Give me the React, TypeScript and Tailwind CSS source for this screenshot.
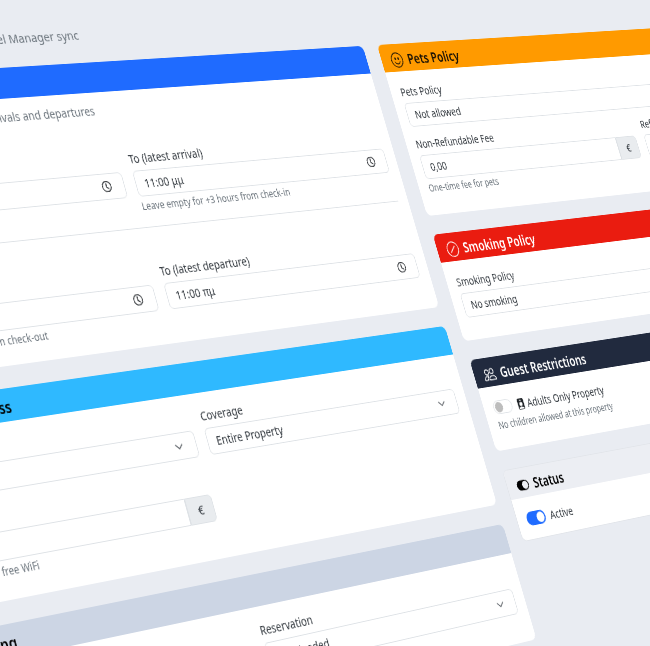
import type { ReactNode } from 'react';
import {
  BsCarFront,
  BsChevronDown,
  BsClock,
  BsEmojiSmile,
  BsPeople,
  BsPersonBadgeFill,
  BsSlashCircle,
  BsToggleOn,
  BsWifi,
} from 'react-icons/bs';

type Pt = [number, number];

// flat page point -> where it lands in the photographed page
const FLAT: Pt[] = [[852, 80], [852, 714], [422, 212], [422, 767]];
const SHOT: Pt[] = [[377, 45], [523, 542], [132, 171], [264, 645]];

function perspective(src: Pt[], dst: Pt[]) {
  const m: number[][] = [];
  src.forEach(([x, y], i) => {
    const [u, v] = dst[i];
    m.push([x, y, 1, 0, 0, 0, -x * u, -y * u, u]);
    m.push([0, 0, 0, x, y, 1, -x * v, -y * v, v]);
  });
  for (let c = 0; c < 8; c++) {
    let p = c;
    for (let r = c + 1; r < 8; r++) if (Math.abs(m[r][c]) > Math.abs(m[p][c])) p = r;
    [m[c], m[p]] = [m[p], m[c]];
    for (let r = 0; r < 8; r++) {
      if (r === c) continue;
      const f = m[r][c] / m[c][c];
      for (let k = c; k < 9; k++) m[r][k] -= f * m[c][k];
    }
  }
  const h = m.map((row, i) => row[8] / row[i]);
  return `matrix3d(${h[0]},${h[3]},0,${h[6]},${h[1]},${h[4]},0,${h[7]},0,0,1,0,${h[2]},${h[5]},0,1)`;
}

function Card({ title, icon, head, pt, pb, children }: { title: string; icon?: ReactNode; head: string; pt?: string; pb: string; children: ReactNode }) {
  return (
    <div className="rounded-lg bg-white overflow-hidden">
      <div className={`h-9 px-4 pt-[5px] flex items-center gap-2 text-[17px] font-semibold ${head}`}>
        <span className="text-xl">{icon}</span>
        <span>{title}</span>
      </div>
      <div className={`px-4 ${pt ?? 'pt-4'} ${pb}`}>{children}</div>
    </div>
  );
}

function Label({ children }: { children: ReactNode }) {
  return <div className="text-sm leading-[21px] mb-1 text-[#343a40]">{children}</div>;
}

function Help({ children }: { children: ReactNode }) {
  return <div className="text-xs leading-4 mt-1 text-[#6c757d]">{children}</div>;
}

function Field({ label, value, icon }: { label: string; value: string; icon?: ReactNode }) {
  return (
    <div>
      <Label>{label}</Label>
      <div className="h-[31px] border border-[#dee2e6] rounded-md pl-3 pr-[18px] flex items-center justify-between text-sm text-[#343a40]">
        <span>{value}</span>
        {icon}
      </div>
    </div>
  );
}

function Money({ label, value }: { label: string; value: string }) {
  return (
    <div>
      <Label>{label}</Label>
      <div className="h-[31px] flex text-sm text-[#343a40]">
        <div className="flex-1 border border-[#dee2e6] rounded-l-md pl-3 flex items-center">{value}</div>
        <div className="w-[38px] bg-[#e9ecef] border border-[#dee2e6] rounded-r-md flex items-center justify-center">€</div>
      </div>
    </div>
  );
}

const clock = <BsClock className="text-[13px] text-[#212529] stroke-[0.6]" />;
const chevron = <BsChevronDown className="text-xs text-[#343a40] stroke-[0.6]" />;

function Toggle({ on }: { on?: boolean }) {
  return (
    <div className={`w-8 h-[17px] rounded-full flex items-center px-[2px] shrink-0 ${on ? 'bg-[#1f6bff] justify-end' : 'bg-white border border-[#dee2e6]'}`}>
      <div className={`w-[13px] h-[13px] rounded-full ${on ? 'bg-white' : 'bg-[#bdbdbd]'}`} />
    </div>
  );
}

export default function App() {
  return (
    <div className="w-[650px] h-[646px] overflow-hidden bg-[#e9ecf2]">
      <div
        className="w-[1800px] h-[1200px] origin-top-left pt-[80px] bg-[#e9ecf2] relative blur-[0.5px] [font-family:'Noto_Sans',sans-serif]"
        style={{ transform: perspective(FLAT, SHOT) }}
      >
        <div className="absolute left-6 top-[35px] text-[15px] text-[#6c757d]">Manage check-in, check-out &amp; Channel Manager sync</div>

        <div className="grid grid-cols-[828px_828px] gap-6 items-start">
          <div className="flex flex-col gap-6">
            <Card title="Check-in & Check-out" icon={<BsClock />} head="bg-[#1f6bff] text-white" pt="pt-[11px]" pb="pb-[19px]">
              <div className="text-sm leading-[21px] text-[#6c757d] mb-[17px]">Define the time window for guest arrivals and departures</div>
              <div className="text-sm leading-[22px] font-semibold">Check-in</div>
              <div className="grid grid-cols-2 gap-4">
                <div>
                  <Field label="From (earliest arrival)" value="03:00 μμ" icon={clock} />
                </div>
                <div>
                  <Field label="To (latest arrival)" value="11:00 μμ" icon={clock} />
                  <Help>Leave empty for +3 hours from check-in</Help>
                </div>
              </div>
              <div className="border-t border-[#dee2e6] mt-4 mb-[19px]" />
              <div className="text-sm leading-[22px] font-semibold">Check-out</div>
              <div className="grid grid-cols-2 gap-4">
                <div>
                  <Field label="From (earliest departure)" value="07:00 πμ" icon={clock} />
                  <Help>Leave empty for -3 hours from check-out</Help>
                </div>
                <div>
                  <Field label="To (latest departure)" value="11:00 πμ" icon={clock} />
                </div>
              </div>
            </Card>

            <Card title="Internet Access" icon={<BsWifi />} head="bg-[#2fb9ff] text-black" pb="pb-[22px]">
              <div className="grid grid-cols-2 gap-4">
                <Field label="Internet" value="Free" icon={chevron} />
                <Field label="Coverage" value="Entire Property" icon={chevron} />
              </div>
              <div className="grid grid-cols-2 gap-4 mt-[18px]">
                <div>
                  <Money label="Price" value="0,00" />
                  <Help>Leave blank for free WiFi</Help>
                </div>
              </div>
            </Card>

            <Card title="Parking" icon={<BsCarFront className="text-[13px]" />} head="bg-[#ccd5e4] text-black" pb="pb-[34px]">
              <div className="grid grid-cols-2 gap-4">
                <Field label="Parking" value="None" icon={chevron} />
                <Field label="Reservation" value="Not Needed" icon={chevron} />
              </div>
            </Card>
          </div>

          <div className="flex flex-col gap-6">
            <Card title="Pets Policy" icon={<BsEmojiSmile />} head="bg-[#ff9a00] text-[#1a1206]" pb="pb-[26px]">
              <Field label="Pets Policy" value="Not allowed" icon={chevron} />
              <div className="grid grid-cols-2 gap-4 mt-3">
                <div>
                  <Money label="Non-Refundable Fee" value="0,00" />
                  <Help>One-time fee for pets</Help>
                </div>
                <Money label="Refundable Deposit" value="0,00" />
              </div>
            </Card>

            <Card title="Smoking Policy" icon={<BsSlashCircle />} head="bg-[#ea1c10] text-white" pb="pb-7">
              <Field label="Smoking Policy" value="No smoking" icon={chevron} />
            </Card>

            <Card title="Guest Restrictions" icon={<BsPeople />} head="bg-[#212a3e] text-white" pb="pb-[22px]">
              <div className="flex items-center gap-2 text-sm leading-[21px] text-[#343a40]">
                <Toggle />
                <span className="flex items-center gap-1"><BsPersonBadgeFill className="text-[#212529]" />Adults Only Property</span>
              </div>
              <Help>No children allowed at this property</Help>
            </Card>

            <div className="rounded-lg bg-white overflow-hidden border border-[#e2e5ea]">
              <div className="h-9 px-4 pt-[5px] flex items-center gap-2 text-[17px] font-semibold text-black bg-[#eceef3]">
                <BsToggleOn className="text-xl" />
                <span>Status</span>
              </div>
              <div className="px-4 pt-4 pb-[14px] flex items-center gap-2 text-sm leading-[21px] text-[#343a40]">
                <Toggle on />
                <span>Active</span>
              </div>
            </div>
          </div>
        </div>
      </div>
    </div>
  );
}
